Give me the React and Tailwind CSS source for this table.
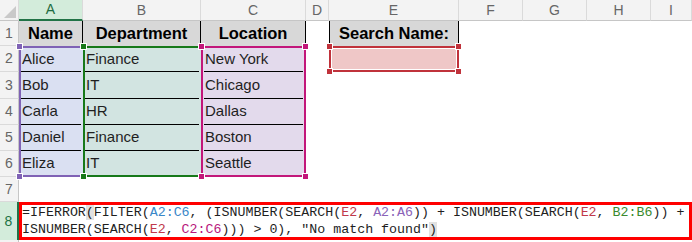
import React from 'react';

const people = [
  ['Alice', 'Finance', 'New York'],
  ['Bob', 'IT', 'Chicago'],
  ['Carla', 'HR', 'Dallas'],
  ['Daniel', 'Finance', 'Boston'],
  ['Eliza', 'IT', 'Seattle'],
];

// little square grips on the corners of a referenced range
const Handle = ({ className }) => (
  <span className={`absolute z-10 w-[7px] h-[7px] border border-white ${className}`} />
);

const ColHead = ({ label }) => (
  <div className="flex items-center justify-center bg-[#f3f3f3] border-r border-r-[#dadada] border-b border-b-[#c6c6c6] text-[14px] text-[#666666]">
    {label}
  </div>
);

const RowHead = ({ n }) => (
  <div className="flex items-center justify-center bg-[#f3f3f3] border-r border-r-[#c6c6c6] border-b border-b-[#dadada] text-[14px] text-[#666666]">
    {n}
  </div>
);

const DataRow = ({ row, i }) => {
  const first = i === 0;
  const last = i === people.length - 1;
  return (
    <>
      <RowHead n={i + 2} />

      {/* A: purple range */}
      <div
        className={`relative bg-[#dae0f2] border-l-2 border-l-[#7f62b5] ${first ? 'border-t-2 border-t-[#7f62b5]' : ''} ${last ? 'border-b-2 border-b-[#7f62b5]' : ''}`}
      >
        {first && <Handle className="bg-[#7f62b5] -left-[5px] -top-[5px]" />}
        {last && <Handle className="bg-[#7f62b5] -left-[5px] -bottom-[5px]" />}
        <div className={`h-full flex items-center pl-[1px] mr-[2px] ${last ? '' : 'border-b border-b-black'}`}>
          {row[0]}
        </div>
      </div>

      {/* B: green range */}
      <div
        className={`relative bg-[#d2e4e1] border-l-2 border-l-[#17791a] ${first ? 'border-t-2 border-t-[#17791a]' : ''} ${last ? 'border-b-2 border-b-[#17791a]' : ''}`}
      >
        {first && <Handle className="bg-[#17791a] -left-[5px] -top-[5px]" />}
        {last && <Handle className="bg-[#17791a] -left-[5px] -bottom-[5px]" />}
        <div className={`h-full flex items-center pl-[1px] mr-[2px] ${last ? '' : 'border-b border-b-black'}`}>
          {row[1]}
        </div>
      </div>

      {/* C: magenta range */}
      <div
        className={`relative bg-[#e3daec] border-x-2 border-x-[#c2177a] ${first ? 'border-t-2 border-t-[#c2177a]' : ''} ${last ? 'border-b-2 border-b-[#c2177a]' : ''}`}
      >
        {first && <Handle className="bg-[#c2177a] -left-[5px] -top-[5px]" />}
        {first && <Handle className="bg-[#c2177a] -right-[5px] -top-[5px]" />}
        {last && <Handle className="bg-[#c2177a] -left-[5px] -bottom-[5px]" />}
        {last && <Handle className="bg-[#c2177a] -right-[5px] -bottom-[5px]" />}
        <div className={`h-full flex items-center pl-[1px] mx-[1px] ${last ? '' : 'border-b border-b-black'}`}>
          {row[2]}
        </div>
      </div>

      <div />

      {first ? (
        <div className="relative border-2 border-[#c0323b]">
          <Handle className="bg-[#c0323b] -left-[5px] -top-[5px]" />
          <Handle className="bg-[#c0323b] -right-[5px] -top-[5px]" />
          <Handle className="bg-[#c0323b] -left-[5px] -bottom-[5px]" />
          <Handle className="bg-[#c0323b] -right-[5px] -bottom-[5px]" />
          <div className="h-full border border-white bg-[#efc7c7]" />
        </div>
      ) : (
        <div />
      )}

      <div className="col-span-4" />
    </>
  );
};

const App = () => {
  return (
    <div className="w-[692px] h-[242px] overflow-hidden bg-white font-['Liberation_Sans',Arial,sans-serif] text-[15px] text-[#1f1f1f]">
      <div className="grid grid-cols-[19px_64px_118px_105px_23px_130px_64px_64px_64px_1fr] grid-rows-[21px_25px_26px_27px_26px_26px_26px_25px_38px_26px]">
        {/* column letters */}
        <div className="relative bg-[#f3f3f3] border-r border-r-[#dadada] border-b border-b-[#c6c6c6]">
          <svg className="absolute right-[2px] bottom-[2px]" width="12" height="12" viewBox="0 0 12 12">
            <polygon points="12,0 12,12 0,12" fill="#c9c9c9" />
          </svg>
        </div>
        <div className="flex items-center justify-center bg-[#d3ecdb] border-r border-r-[#dadada] border-b-2 border-b-[#217346] text-[14px] text-[#1e6b41]">
          A
        </div>
        {['B', 'C', 'D', 'E', 'F', 'G', 'H', 'I'].map((c) => (
          <ColHead key={c} label={c} />
        ))}

        {/* row 1: headings */}
        <RowHead n={1} />
        <div className="flex items-center justify-center bg-[#d8d8d8] border-r border-r-black font-bold text-[16.5px] text-black">
          Name
        </div>
        <div className="flex items-center justify-center bg-[#d8d8d8] border-r border-r-black font-bold text-[16.5px] text-black">
          Department
        </div>
        <div className="flex items-center justify-center bg-[#d8d8d8] border-r border-r-black font-bold text-[16.5px] text-black">
          Location
        </div>
        <div />
        <div className="flex items-center justify-center bg-[#d8d8d8] border-x border-x-black font-bold text-[16.5px] text-black">
          Search Name:
        </div>
        <div className="col-span-4" />

        {people.map((row, i) => (
          <DataRow key={row[0]} row={row} i={i} />
        ))}

        {/* row 7 */}
        <RowHead n={7} />
        <div className="col-span-9" />

        {/* row 8: formula */}
        <div className="flex items-center justify-center bg-[#d3ecdb] border-r-2 border-r-[#217346] text-[14px] text-[#217346]">
          8
        </div>
        <div className="col-span-9 border-[3px] border-[#ff0000] font-['Liberation_Mono',monospace] text-[13.3px] leading-[16.5px] text-[#1f1f1f] whitespace-pre overflow-hidden">
          <div>
            =IFERROR<span className="bg-[#e1e1e1]">(</span>FILTER(<span className="text-[#3a87c8]">A2:C6</span>, (ISNUMBER(SEARCH(<span className="text-[#c0394b]">E2</span>, <span className="text-[#8a63b8]">A2:A6</span>)) + ISNUMBER(SEARCH(<span className="text-[#c0394b]">E2</span>, <span className="text-[#3b8a2e]">B2:B6</span>)) +
          </div>
          <div>
            ISNUMBER(SEARCH(<span className="text-[#c0394b]">E2</span>, <span className="text-[#b8177c]">C2:C6</span>))) &gt; 0), "No match found"<span className="bg-[#e1e1e1]">)</span>
          </div>
        </div>

        {/* row 9, mostly cut off */}
        <RowHead n={9} />
        <div className="col-span-9" />
      </div>
    </div>
  );
};

export default App;
